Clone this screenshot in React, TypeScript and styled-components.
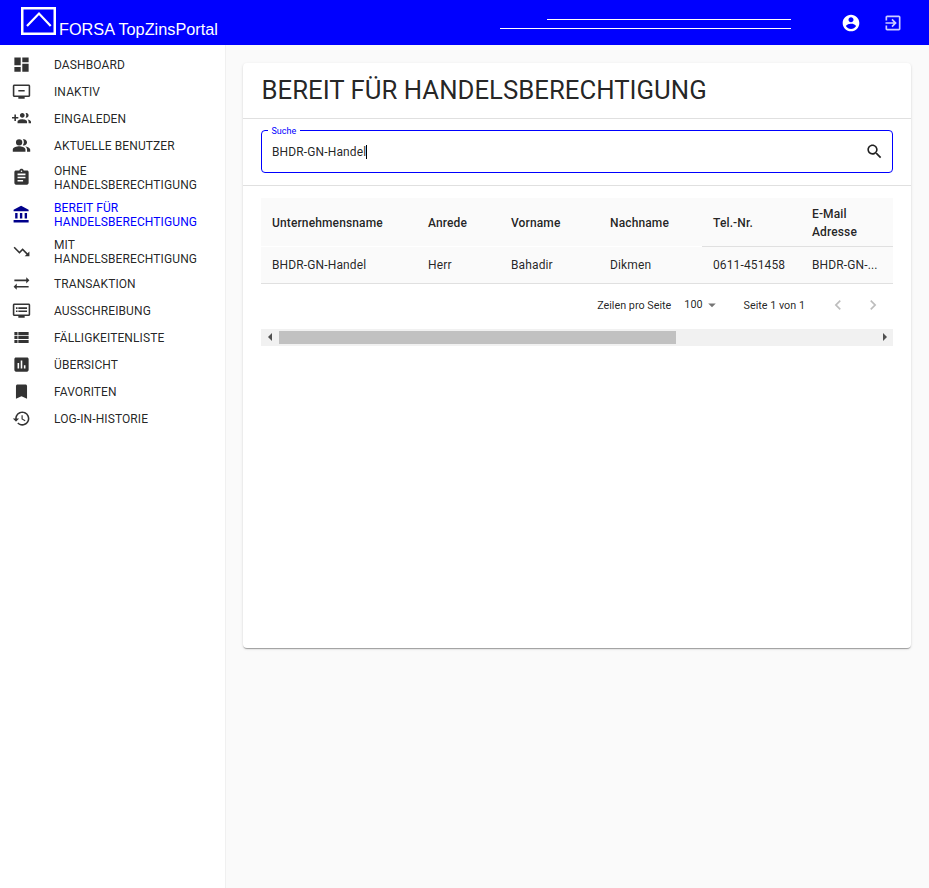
import React from "react";
import styled, { createGlobalStyle } from "styled-components";

const GlobalStyle = createGlobalStyle`
  html, body {
    margin: 0;
    padding: 0;
    background: #fafafa;
    font-family: Roboto, "Liberation Sans", sans-serif;
  }
`;

const icons = {
  dashboard: "M3 13h8V3H3v10zm0 8h8v-6H3v6zm10 0h8V11h-8v10zm0-18v6h8V3h-8z",
  inactive:
    "M21 3H3c-1.11 0-2 .89-2 2v12c0 1.1.89 2 2 2h5v2h8v-2h5c1.1 0 1.99-.9 1.99-2L23 5c0-1.11-.9-2-2-2zm0 14H3V5h18v12zm-5-7v2H8v-2h8z",
  groupAdd:
    "M8 10H5V7H3v3H0v2h3v3h2v-3h3v-2zm10 1c1.66 0 2.99-1.34 2.99-3S19.66 5 18 5c-.32 0-.63.05-.91.14.57.81.9 1.79.9 2.86s-.34 2.04-.9 2.86c.28.09.59.14.91.14zm-5 0c1.66 0 2.99-1.34 2.99-3S14.66 5 13 5s-3 1.34-3 3 1.34 3 3 3zm6.62 2.16c.83.73 1.38 1.66 1.38 2.84v2h3v-2c0-1.54-2.37-2.49-4.38-2.84zM13 13c-2 0-6 1-6 3v2h12v-2c0-2-4-3-6-3z",
  people:
    "M16.67 13.13C18.04 14.06 19 15.32 19 17v3h4v-3c0-2.18-3.57-3.47-6.33-3.87zM9 4a4 4 0 1 0 0 8 4 4 0 1 0 0-8zM15 12c2.21 0 4-1.79 4-4s-1.79-4-4-4c-.47 0-.91.1-1.33.24C14.5 5.27 15 6.58 15 8s-.5 2.73-1.33 3.76c.42.14.86.24 1.33.24zM9 13c-2.67 0-8 1.34-8 4v3h16v-3c0-2.66-5.33-4-8-4z",
  assignment:
    "M19 3h-4.18C14.4 1.84 13.3 1 12 1c-1.3 0-2.4.84-2.82 2H5c-1.1 0-2 .9-2 2v14c0 1.1.9 2 2 2h14c1.1 0 2-.9 2-2V5c0-1.1-.9-2-2-2zm-7 0c.55 0 1 .45 1 1s-.45 1-1 1-1-.45-1-1 .45-1 1-1zm2 14H7v-2h7v2zm3-4H7v-2h10v2zm0-4H7V7h10v2z",
  bank: "M4 10v7h3v-7H4zm6 0v7h3v-7h-3zM2 22h19v-3H2v3zm14-12v7h3v-7h-3zm-4.5-9L2 6v2h19V6l-9.5-5z",
  trendingDown: "M16 18l2.29-2.29-4.88-4.88-4 4L2 7.41 3.41 6l6 6 4-4 6.3 6.29L22 12v6z",
  syncAlt: "M22 8l-4-4v3H3v2h15v3zM2 16l4 4v-3h15v-2H6v-3z",
  dvr: "M21 3H3c-1.1 0-2 .9-2 2v12c0 1.1.9 2 2 2h5v2h8v-2h5c1.1 0 1.99-.9 1.99-2L23 5c0-1.1-.9-2-2-2zm0 14H3V5h18v12zm-2-9H8v2h11V8zm0 4H8v2h11v-2zM7 8H5v2h2V8zm0 4H5v2h2v-2z",
  viewList: "M3 14h4v-4H3v4zm0 5h4v-4H3v4zM3 9h4V5H3v4zm5 5h13v-4H8v4zm0 5h13v-4H8v4zM8 5v4h13V5H8z",
  assessment:
    "M19 3H5c-1.1 0-2 .9-2 2v14c0 1.1.9 2 2 2h14c1.1 0 2-.9 2-2V5c0-1.1-.9-2-2-2zM9 17H7v-7h2v7zm4 0h-2V7h2v10zm4 0h-2v-4h2v4z",
  bookmark: "M17 3H7c-1.1 0-1.99.9-1.99 2L5 21l7-3 7 3V5c0-1.1-.9-2-2-2z",
  history:
    "M13 3c-4.97 0-9 4.03-9 9H1l3.89 3.89.07.14L9 12H6c0-3.87 3.13-7 7-7s7 3.13 7 7-3.13 7-7 7c-1.93 0-3.68-.79-4.94-2.06l-1.42 1.42C8.27 19.99 10.51 21 13 21c4.97 0 9-4.03 9-9s-4.03-9-9-9zm-1 5v5l4.28 2.54.72-1.21-3.5-2.08V8H12z",
  account:
    "M12 2C6.48 2 2 6.48 2 12s4.48 10 10 10 10-4.48 10-10S17.52 2 12 2zm0 3c1.66 0 3 1.34 3 3s-1.34 3-3 3-3-1.34-3-3 1.34-3 3-3zm0 14.2c-2.5 0-4.71-1.28-6-3.22.03-1.99 4-3.08 6-3.08 1.99 0 5.97 1.09 6 3.08-1.29 1.94-3.5 3.22-6 3.22z",
  exit: "M10.09 15.59L11.5 17l5-5-5-5-1.41 1.41L12.67 11H3v2h9.67l-2.58 2.59zM19 3H5c-1.11 0-2 .9-2 2v4h2V5h14v14H5v-4H3v4c0 1.1.89 2 2 2h14c1.1 0 2-.9 2-2V5c0-1.1-.9-2-2-2z",
  search:
    "M15.5 14h-.79l-.28-.27C15.41 12.59 16 11.11 16 9.5 16 5.91 13.09 3 9.5 3S3 5.91 3 9.5 5.91 16 9.5 16c1.61 0 3.09-.59 4.23-1.57l.27.28v.79l5 4.99L20.49 19l-4.99-5zm-6 0C7.01 14 5 11.99 5 9.5S7.01 5 9.5 5 14 7.01 14 9.5 11.99 14 9.5 14z",
  dropDown: "M7 10l5 5 5-5z",
  left: "M15.41 7.41L14 6l-6 6 6 6 1.41-1.41L10.83 12z",
  right: "M10 6L8.59 7.41 13.17 12l-4.58 4.58L10 18l6-6z",
};

type IconName = keyof typeof icons;

const Icon = ({ name, size = 20, className }: { name: IconName; size?: number; className?: string }) => (
  <svg className={className} width={size} height={size} viewBox="0 0 24 24" fill="currentColor">
    <path d={icons[name]} />
  </svg>
);

const menu: { icon: IconName; label: string; active?: boolean }[] = [
  { icon: "dashboard", label: "Dashboard" },
  { icon: "inactive", label: "Inaktiv" },
  { icon: "groupAdd", label: "Eingaleden" },
  { icon: "people", label: "Aktuelle Benutzer" },
  { icon: "assignment", label: "Ohne Handelsberechtigung" },
  { icon: "bank", label: "Bereit für Handelsberechtigung", active: true },
  { icon: "trendingDown", label: "Mit Handelsberechtigung" },
  { icon: "syncAlt", label: "Transaktion" },
  { icon: "dvr", label: "Ausschreibung" },
  { icon: "viewList", label: "Fälligkeitenliste" },
  { icon: "assessment", label: "Übersicht" },
  { icon: "bookmark", label: "Favoriten" },
  { icon: "history", label: "Log-in-Historie" },
];

const columns = [
  { title: "Unternehmensname", width: 156, value: "BHDR-GN-Handel" },
  { title: "Anrede", width: 83, value: "Herr" },
  { title: "Vorname", width: 99, value: "Bahadir" },
  { title: "Nachname", width: 103, value: "Dikmen" },
  { title: "Tel.-Nr.", width: 99, value: "0611-451458", ruled: true },
  { title: "E-Mail Adresse", width: 92, value: "BHDR-GN-...", ruled: true },
];

export default function App() {
  return (
    <Page>
      <GlobalStyle />
      <Header>
        <Brand>
          <Logo viewBox="0 0 35 28">
            <rect x="1.25" y="1.25" width="32.5" height="25.5" fill="none" stroke="#fff" strokeWidth="2.5" />
            <path d="M6 19 L18 6.6 L29.7 19" fill="none" stroke="#fff" strokeWidth="2.2" />
          </Logo>
          <BrandName>FORSA TopZinsPortal</BrandName>
        </Brand>
        <UserLines>
          <UserLine $width={244} />
          <UserLine $width={291} />
        </UserLines>
        <HeaderIcon name="account" />
        <ExitIcon name="exit" />
      </Header>
      <Body>
        <Sidebar>
          {menu.map((item) => (
            <MenuItem key={item.label} $active={item.active}>
              <MenuIcon name={item.icon} size={19} $active={item.active} />
              <MenuLabel>{item.label}</MenuLabel>
            </MenuItem>
          ))}
        </Sidebar>
        <Main>
          <Card>
            <CardTitle>Bereit für Handelsberechtigung</CardTitle>
            <SearchSection>
              <SearchBox>
                <SearchLabel>Suche</SearchLabel>
                <SearchValue>BHDR-GN-Handel</SearchValue>
                <Caret />
                <SearchIcon name="search" size={19} />
              </SearchBox>
            </SearchSection>
            <TableSection>
              <Table>
                <thead>
                  <tr>
                    {columns.map((col) => (
                      <HeadCell key={col.title} $width={col.width} $ruled={col.ruled}>
                        {col.title}
                      </HeadCell>
                    ))}
                  </tr>
                </thead>
                <tbody>
                  <tr>
                    {columns.map((col) => (
                      <BodyCell key={col.title}>{col.value}</BodyCell>
                    ))}
                  </tr>
                </tbody>
              </Table>
              <Pagination>
                <PagerText>Zeilen pro Seite</PagerText>
                <RowsSelect>
                  100
                  <DropIcon name="dropDown" size={18} />
                </RowsSelect>
                <PageInfo>Seite 1 von 1</PageInfo>
                <PagerIcon name="left" />
                <PagerIcon name="right" />
              </Pagination>
              <ScrollBar>
                <ScrollArrow $dir="left" />
                <ScrollTrack>
                  <ScrollThumb />
                </ScrollTrack>
                <ScrollArrow $dir="right" />
              </ScrollBar>
            </TableSection>
          </Card>
        </Main>
      </Body>
    </Page>
  );
}

const Page = styled.div`
  min-height: 888px;
  display: flex;
  flex-direction: column;
`;

const Header = styled.header`
  height: 45px;
  background: #0000ff;
  display: flex;
  align-items: center;
  padding: 0 26px 0 21px;
  color: #fff;
`;

const Brand = styled.div`
  display: flex;
  align-items: flex-end;
  height: 45px;
  padding-bottom: 7px;
  box-sizing: border-box;
  margin-right: auto;
`;

const Logo = styled.svg`
  width: 35px;
  height: 28px;
  margin-bottom: 3px;
`;

const BrandName = styled.span`
  font-family: "Liberation Sans", Arial, sans-serif;
  font-size: 16.3px;
  line-height: 18px;
  margin-left: 3px;
  white-space: nowrap;
`;

const UserLines = styled.div`
  width: 291px;
  display: flex;
  flex-direction: column;
  align-items: flex-end;
  gap: 8px;
  margin-right: 50px;
  padding-top: 3px;
`;

const UserLine = styled.div<{ $width: number }>`
  width: ${(p) => p.$width}px;
  height: 1px;
  background: #fff;
`;

const HeaderIcon = styled(Icon)`
  margin-right: 22px;
  color: #fff;
`;

const ExitIcon = styled(Icon)`
  color: rgba(255, 255, 255, 0.8);
`;

const Body = styled.div`
  flex: 1;
  display: flex;
`;

const Sidebar = styled.nav`
  width: 225px;
  flex: none;
  background: #fff;
  border-right: 1px solid #f0f0f0;
  padding-top: 6px;
  box-sizing: content-box;
`;

const MenuItem = styled.div<{ $active?: boolean }>`
  display: flex;
  align-items: center;
  min-height: 27px;
  padding: 0 16px 0 12px;
  box-sizing: border-box;
  color: ${(p) => (p.$active ? "#0000ff" : "rgba(0, 0, 0, 0.87)")};
`;

const MenuIcon = styled(Icon)<{ $active?: boolean }>`
  flex: none;
  color: ${(p) => (p.$active ? "#00008b" : "rgba(0, 0, 0, 0.8)")};
`;

const MenuLabel = styled.span`
  margin-left: 23px;
  padding: 4.5px 0;
  font-size: 12px;
  line-height: 14px;
  letter-spacing: 0.1px;
  text-transform: uppercase;
`;

const Main = styled.main`
  flex: 1;
  padding: 18px 18px 0 17px;
  min-width: 0;
`;

const Card = styled.section`
  height: 585px;
  background: #fff;
  border-radius: 4px;
  box-shadow: 0 2px 1px -1px rgba(0, 0, 0, 0.2), 0 1px 1px 0 rgba(0, 0, 0, 0.14),
    0 1px 3px 0 rgba(0, 0, 0, 0.12);
`;

const CardTitle = styled.h1`
  margin: 0;
  height: 53px;
  padding: 0 18px 2px 18.5px;
  display: flex;
  align-items: center;
  font-size: 25.75px;
  font-weight: 400;
  color: rgba(0, 0, 0, 0.87);
  text-transform: uppercase;
  border-bottom: 1px solid #e0e0e0;
`;

const SearchSection = styled.div`
  padding: 11px 18px 12px;
  border-bottom: 1px solid #e0e0e0;
`;

const SearchBox = styled.div`
  position: relative;
  height: 43px;
  box-sizing: border-box;
  border: 1px solid #0000ff;
  border-radius: 4px;
  display: flex;
  align-items: center;
  padding: 0 8px 0 10px;
  font-size: 12px;
  color: rgba(0, 0, 0, 0.87);
`;

const SearchLabel = styled.label`
  position: absolute;
  top: -5px;
  left: 5.5px;
  padding: 0 4px;
  background: #fff;
  font-size: 9px;
  line-height: 10px;
  color: #0000ff;
`;

const SearchValue = styled.span`
  letter-spacing: 0.13px;
`;

const Caret = styled.span`
  width: 1px;
  height: 14px;
  background: #000;
`;

const SearchIcon = styled(Icon)`
  margin-left: auto;
  color: rgba(0, 0, 0, 0.87);
`;

const TableSection = styled.div`
  padding: 12px 18px 0;
`;

const Table = styled.table`
  width: 632px;
  table-layout: fixed;
  border-collapse: collapse;
  background: #fafafa;
  font-size: 12px;
  letter-spacing: 0.13px;
  color: rgba(0, 0, 0, 0.87);
`;

const HeadCell = styled.th<{ $width: number; $ruled?: boolean }>`
  width: ${(p) => p.$width}px;
  height: 48px;
  padding: 2px 11px 0;
  box-sizing: border-box;
  text-align: left;
  font-weight: 500;
  line-height: 18px;
  border-bottom: 1px solid ${(p) => (p.$ruled ? "#e0e0e0" : "#fff")};
`;

const BodyCell = styled.td`
  height: 37px;
  padding: 0 11px;
  box-sizing: border-box;
  border-bottom: 1px solid #e0e0e0;
  white-space: nowrap;
`;

const Pagination = styled.div`
  height: 45px;
  box-sizing: border-box;
  padding: 0 10px 2px 0;
  display: flex;
  align-items: center;
  justify-content: flex-end;
  font-size: 10.8px;
  color: rgba(0, 0, 0, 0.87);
`;

const PagerText = styled.span`
  white-space: nowrap;
`;

const RowsSelect = styled.span`
  display: flex;
  align-items: center;
  margin-left: 13px;
  margin-top: -2px;
`;

const DropIcon = styled(Icon)`
  color: rgba(0, 0, 0, 0.54);
  margin-top: 2px;
`;

const PageInfo = styled.span`
  margin-left: 23px;
  margin-right: 8px;
  white-space: nowrap;
`;

const PagerIcon = styled(Icon)`
  color: rgba(0, 0, 0, 0.26);
  margin-left: 15px;
`;

const ScrollBar = styled.div`
  height: 17px;
  display: flex;
  align-items: center;
  background: #f1f1f1;
`;

const ScrollArrow = styled.span<{ $dir: "left" | "right" }>`
  flex: none;
  width: 17px;
  display: flex;
  justify-content: center;
  &::before {
    content: "";
    border-style: solid;
    border-color: transparent;
    border-width: 4px 0 4px 4px;
    border-left-color: #505050;
    ${(p) => p.$dir === "left" && "transform: rotate(180deg);"}
  }
`;

const ScrollTrack = styled.div`
  flex: 1;
  height: 13px;
`;

const ScrollThumb = styled.div`
  width: 397px;
  height: 100%;
  margin-left: 1px;
  background: #c1c1c1;
`;
